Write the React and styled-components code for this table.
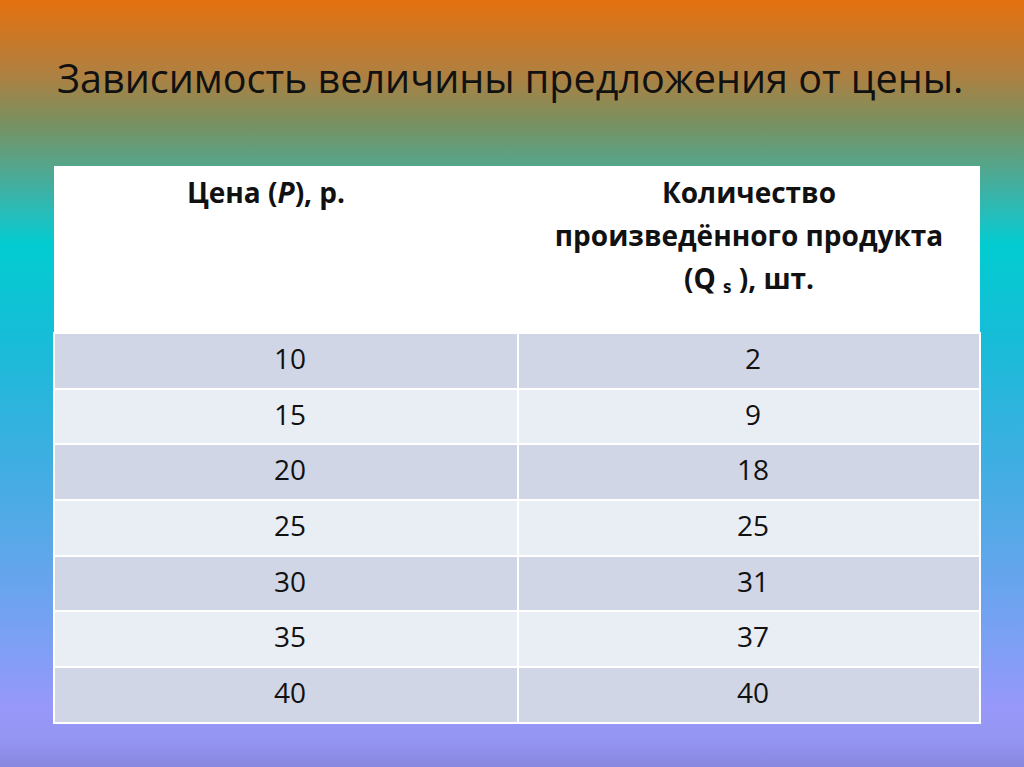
import styled, { createGlobalStyle } from "styled-components";

const GlobalStyle = createGlobalStyle`
  html, body {
    margin: 0;
    padding: 0;
  }
  body {
    font-family: "Open Sans", "Noto Sans", sans-serif;
  }
`;

const Slide = styled.div`
  width: 1024px;
  height: 767px;
  box-sizing: border-box;
  padding: 50px 45px 0 53px;
  display: flex;
  flex-direction: column;
  overflow: hidden;
  background: linear-gradient(
    to bottom,
    #e5700e 0px,
    #b08040 73px,
    #7a9060 122px,
    #50a890 171px,
    #20c0c0 220px,
    #02ccd0 245px,
    #18bcd8 342px,
    #38b0e0 440px,
    #58a8e8 538px,
    #7aa0f4 636px,
    #9898fa 709px,
    #9494f2 740px,
    #8888e0 767px
  );
`;

const Title = styled.h1`
  margin: 0 0 60px 4px;
  font-family: "Open Sans", "Noto Sans", sans-serif;
  font-weight: 400;
  font-size: 39.5px;
  line-height: 56px;
  color: #111;
  white-space: nowrap;
`;

const Table = styled.table`
  width: 926px;
  border-collapse: collapse;
  table-layout: fixed;
  font-family: "Open Sans", "Noto Sans", sans-serif;
  color: #111;
`;

const HeadCell = styled.th`
  height: 167px;
  box-sizing: border-box;
  padding: 5px ${(p) => p.$right || 0}px 0 0;
  vertical-align: top;
  text-align: center;
  background: #fff;
  font-size: 28px;
  font-weight: 700;
  line-height: 43px;

  sub {
    font-size: 17px;
    vertical-align: -4px;
    line-height: 0;
  }
`;

const Row = styled.tr`
  background: ${(p) => (p.$dark ? "#d0d6e5" : "#e9edf4")};
`;

const Cell = styled.td`
  height: 55.7px;
  box-sizing: border-box;
  padding: 0 0 6px 8px;
  border: 2px solid #fff;
  text-align: center;
  vertical-align: middle;
  font-size: 28px;
  line-height: 38px;
`;

const rows = [
  [10, 2],
  [15, 9],
  [20, 18],
  [25, 25],
  [30, 31],
  [35, 37],
  [40, 40],
];

export default function App() {
  return (
    <>
      <GlobalStyle />
      <Slide>
        <Title>Зависимость величины предложения от цены.</Title>
        <Table>
          <colgroup>
            <col style={{ width: "464px" }} />
            <col style={{ width: "462px" }} />
          </colgroup>
          <thead>
            <tr>
              <HeadCell $right={40}>
                Цена (<i>P</i>), р.
              </HeadCell>
              <HeadCell>
                Количество
                <br />
                произведённого продукта
                <br />
                (Q <sub>s</sub> ), шт.
              </HeadCell>
            </tr>
          </thead>
          <tbody>
            {rows.map(([p, q], i) => (
              <Row key={p} $dark={i % 2 === 0}>
                <Cell>{p}</Cell>
                <Cell>{q}</Cell>
              </Row>
            ))}
          </tbody>
        </Table>
      </Slide>
    </>
  );
}
